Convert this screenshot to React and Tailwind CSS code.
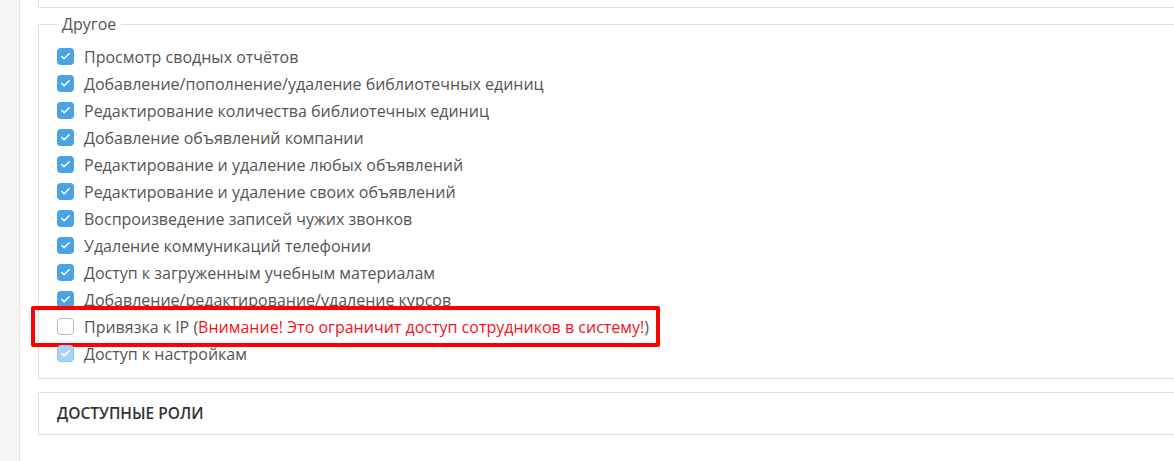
import { Check } from "lucide-react";

const rights = [
  { label: "Просмотр сводных отчётов", checked: true },
  { label: "Добавление/пополнение/удаление библиотечных единиц", checked: true },
  { label: "Редактирование количества библиотечных единиц", checked: true },
  { label: "Добавление объявлений компании", checked: true },
  { label: "Редактирование и удаление любых объявлений", checked: true },
  { label: "Редактирование и удаление своих объявлений", checked: true },
  { label: "Воспроизведение записей чужих звонков", checked: true },
  { label: "Удаление коммуникаций телефонии", checked: true },
  { label: "Доступ к загруженным учебным материалам", checked: true },
  { label: "Добавление/редактирование/удаление курсов", checked: true },
  { label: "Привязка к IP", checked: false, warning: "Внимание! Это ограничит доступ сотрудников в систему!", highlight: true },
  { label: "Доступ к настройкам", checked: true, disabled: true },
];

function Box({ checked, disabled }) {
  if (!checked) {
    return <span className="h-[17px] w-[17px] shrink-0 rounded-[4px] border border-[#b9b9b9] bg-white" />;
  }
  return (
    <span
      className={`flex h-[17px] w-[17px] shrink-0 items-center justify-center rounded-[4px] ${
        disabled ? "border border-[#8cc3ee] bg-[#a9d3f4]" : "bg-[#4aa3e6]"
      }`}
    >
      <Check className="h-[11px] w-[11px] text-white" strokeWidth={3.5} />
    </span>
  );
}

function RightRow({ item }) {
  return (
    <div className="flex h-[27px] items-center">
      <label className="relative flex items-center gap-[10px]">
        <Box checked={item.checked} disabled={item.disabled} />
        <span className="whitespace-nowrap">
          {item.label}
          {item.warning && (
            <>
              {" ("}
              <span className="text-[#f5131b]">{item.warning}</span>
              {")"}
            </>
          )}
        </span>
        {/* рамка-выделение поверх строки */}
        {item.highlight && (
          <span className="pointer-events-none absolute -top-[9px] -bottom-[8px] -left-[26px] -right-[11px] rounded-[2px] border-[4px] border-[#ff0000]" />
        )}
      </label>
    </div>
  );
}

export default function App() {
  return (
    <div
      className="flex h-[461px] w-full overflow-hidden bg-white text-[16px] text-[#555]"
      style={{ fontFamily: '"Open Sans", "Liberation Sans", sans-serif' }}
    >
      <div className="w-[20px] shrink-0 border-r border-[#e3e3e3] bg-[#f7f7f7]" />

      <div className="flex-1 pl-[18px]">
        <div className="h-[8px] w-[1200px] border-b border-l border-[#dedede]" />

        <fieldset className="mt-[5px] w-[1200px] border border-[#dedede] pb-[11px] pl-[18px] pt-[8px]">
          <legend className="px-[5px] leading-[22px] text-[#555]">Другое</legend>
          {rights.map((r) => (
            <RightRow key={r.label} item={r} />
          ))}
        </fieldset>

        <div className="mt-[13px] flex h-[43px] w-[1200px] items-center border border-[#dedede] pl-[18px]">
          <span className="text-[15.5px] font-semibold uppercase text-[#333]">Доступные роли</span>
        </div>
      </div>
    </div>
  );
}
